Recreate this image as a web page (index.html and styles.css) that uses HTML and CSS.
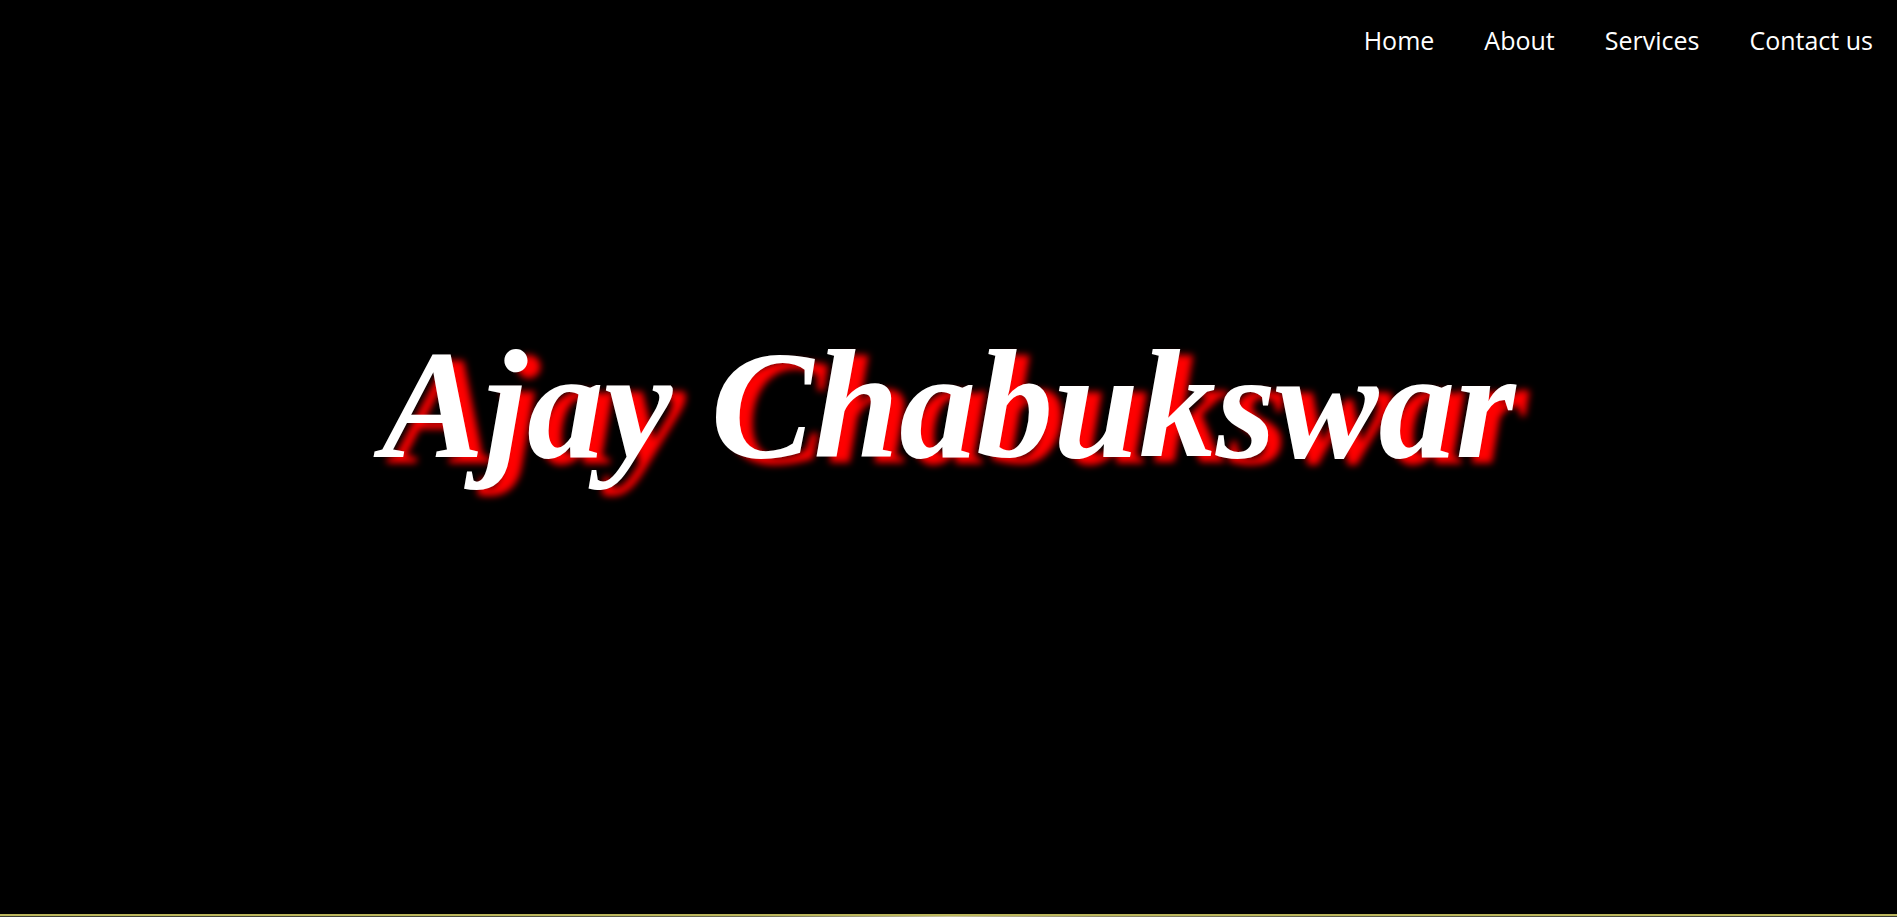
FILE: index.html
```html
<!DOCTYPE html>
<html lang="en">
<head>
<meta charset="utf-8">
<title>Ajay Chabukswar</title>
<link rel="stylesheet" href="styles.css">
</head>
<body>
<section class="hero">
  <nav class="nav">
    <a class="nav-link" href="#">Home</a>
    <a class="nav-link" href="#">About</a>
    <a class="nav-link" href="#">Services</a>
    <a class="nav-link" href="#">Contact us</a>
  </nav>
  <div class="title-wrap">
    <h1 class="title">Ajay Chabukswar</h1>
  </div>
</section>
<section class="next"></section>
</body>
</html>
```
FILE: styles.css
```css
html, body {
  margin: 0;
  padding: 0;
  background: #000;
  overflow: hidden;
}
.hero {
  height: 914px;
  display: flex;
  flex-direction: column;
  background: #000;
}
.nav {
  display: flex;
  justify-content: flex-end;
  gap: 50px;
  padding: 23px 24px 0 0;
  height: 34px;
  align-items: center;
}
.nav-link {
  font-family: "Open Sans", "Noto Sans", sans-serif;
  font-size: 25px;
  color: #fff;
  text-decoration: none;
  line-height: 34px;
}
.title-wrap {
  display: flex;
  justify-content: center;
  padding-top: 271px;
}
.title {
  margin: 0;
  font-family: "Liberation Serif", "Times New Roman", serif;
  font-weight: bold;
  font-style: italic;
  font-size: 154px;
  line-height: 1;
  color: #fff;
  text-shadow: 13px 6px 7px #ff0000;
}
.next {
  height: 20px;
  border-top: 2px solid #bcb75e;
  background: linear-gradient(90deg, #3c3e36 0%, #4a4c40 25%, #6f7058 40%, #c9c4a0 50%, #8d8a6c 58%, #5b5d4c 70%, #3a3c34 100%);
}
```
